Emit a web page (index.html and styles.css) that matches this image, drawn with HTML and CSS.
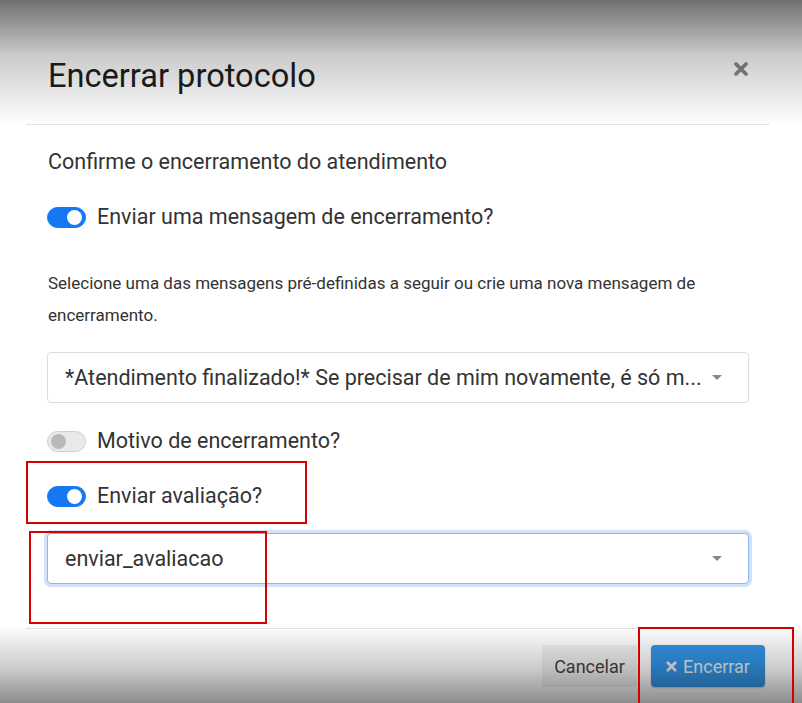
FILE: index.html
```html
<!DOCTYPE html>
<html lang="pt-BR">
<head>
  <meta charset="UTF-8">
  <title>Encerrar protocolo</title>
  <link rel="stylesheet" href="styles.css">
</head>
<body>
  <div class="modal">
    <div class="modal-header">
      <h1 class="modal-title">Encerrar protocolo</h1>
      <button class="close" aria-label="Fechar">
        <svg width="16" height="16" viewBox="0 0 16 16"><path d="M3 3 L13 13 M13 3 L3 13" stroke="#8a8a8a" stroke-width="3.8" stroke-linecap="round"/></svg>
      </button>
    </div>

    <div class="modal-body">
      <p class="lead">Confirme o encerramento do atendimento</p>

      <label class="toggle-row row-first">
        <span class="switch on"></span>
        <span>Enviar uma mensagem de encerramento?</span>
      </label>

      <p class="hint">Selecione uma das mensagens pré-definidas a seguir ou crie uma nova mensagem de encerramento.</p>

      <div class="select">
        <span class="select-text">*Atendimento finalizado!* Se precisar de mim novamente, é só m...</span>
        <span class="caret"></span>
      </div>

      <label class="toggle-row row-gap">
        <span class="switch"></span>
        <span>Motivo de encerramento?</span>
      </label>

      <label class="toggle-row row-gap">
        <span class="switch on"></span>
        <span>Enviar avaliação?</span>
      </label>

      <div class="select focused">
        <span class="select-text">enviar_avaliacao</span>
        <span class="caret"></span>
      </div>
    </div>

    <div class="modal-footer">
      <button class="btn btn-light">Cancelar</button>
      <button class="btn btn-primary">
        <svg width="11" height="11" viewBox="0 0 12 12"><path d="M2 2 L10 10 M10 2 L2 10" stroke="#e4eef6" stroke-width="3" stroke-linecap="round"/></svg>
        Encerrar
      </button>
    </div>
  </div>

  <!-- marcações em vermelho -->
  <div class="mark mark-1"></div>
  <div class="mark mark-2"></div>
  <div class="mark mark-3"></div>
</body>
</html>
```

FILE: styles.css
```css
html, body { height: 100%; }
body {
  margin: 0; background: #fff; color: #333;
  font-family: Roboto, "Liberation Sans", sans-serif;
  overflow: hidden; position: relative;
}
/* sombra da foto em cima e embaixo */
body::before, body::after {
  content: ""; position: fixed; left: 0; right: 0; pointer-events: none; z-index: 5;
}
body::before { top: 0; height: 125px; background: linear-gradient(rgba(0,0,0,.56), rgba(0,0,0,.2) 45%, rgba(0,0,0,0)); }
body::after { bottom: 0; height: 78px; background: linear-gradient(rgba(0,0,0,0), rgba(0,0,0,.2) 55%, rgba(0,0,0,.45)); }

.modal { margin: 0 32px 0 26px; }

.modal-header {
  display: flex; justify-content: space-between; align-items: flex-start;
  box-sizing: border-box; height: 125px; padding: 56px 21px 0 22px;
  border-bottom: 1px solid #e3e3e3;
}
.modal-title { margin: 0; font-size: 32.6px; line-height: 40px; font-weight: 400; color: #1e1e1e; }
.close { border: none; background: none; padding: 0; margin-top: 5px; line-height: 0; }

.modal-body { padding: 0 21px 44px; }
.lead { margin: 23px 0 0 1px; font-size: 21.5px; line-height: 28px; color: #333; }

.toggle-row { display: flex; align-items: center; gap: 11px; font-size: 21.5px; line-height: 28px; color: #333; }
.row-first { margin-top: 27px; }
.row-gap { margin-top: 24px; }
.row-gap + .row-gap { margin-top: 27px; }

.switch {
  position: relative; box-sizing: border-box; width: 39px; height: 21px;
  border-radius: 11px; background: #e9e9e9; border: 1px solid #cfcfcf;
}
.switch::after {
  content: ""; position: absolute; top: 2px; left: 3px; width: 15px; height: 15px;
  border-radius: 50%; background: #b9b9b9;
}
.switch.on { background: #1677f2; border-color: #1677f2; }
.switch.on::after { left: auto; right: 3px; background: #fff; }

.hint { margin: 36px 0 0 1px; font-size: 17px; line-height: 32px; color: #333; }

.select {
  display: flex; align-items: center; justify-content: space-between;
  box-sizing: border-box; height: 51px; margin-top: 21px; padding: 0 26px 0 17px;
  border: 1px solid #dcdcdc; border-radius: 4px; background: #fff;
  font-size: 21.5px; color: #333;
}
.select.focused {
  margin-top: 23px; border-color: #8ab8ee;
  box-shadow: 0 0 0 3px rgba(120, 170, 235, .35);
}
.caret { width: 0; height: 0; border-left: 5px solid transparent; border-right: 5px solid transparent; border-top: 5px solid #888; }

.modal-footer {
  display: flex; justify-content: flex-end; gap: 14px;
  padding: 16px 5px 0; border-top: 1px solid #e3e3e3;
}
.btn { border: none; border-radius: 4px; height: 42px; font-family: inherit; font-size: 18px; }
.btn-light { width: 95px; background: #f1f1f1; color: #444; border-radius: 0; }
.btn-primary {
  display: flex; align-items: center; justify-content: center; gap: 6px; width: 114px; padding: 0;
  background: #3395e6; color: #e4eef6; box-shadow: 0 1px 2px rgba(0,0,0,.2);
}

.mark { position: absolute; border: 2px solid #d40000; z-index: 6; }
.mark-1 { left: 26px; top: 461px; width: 277px; height: 59px; }
.mark-2 { left: 29px; top: 531px; width: 234px; height: 89px; }
.mark-3 { left: 638px; top: 627px; width: 152px; height: 80px; }
```
